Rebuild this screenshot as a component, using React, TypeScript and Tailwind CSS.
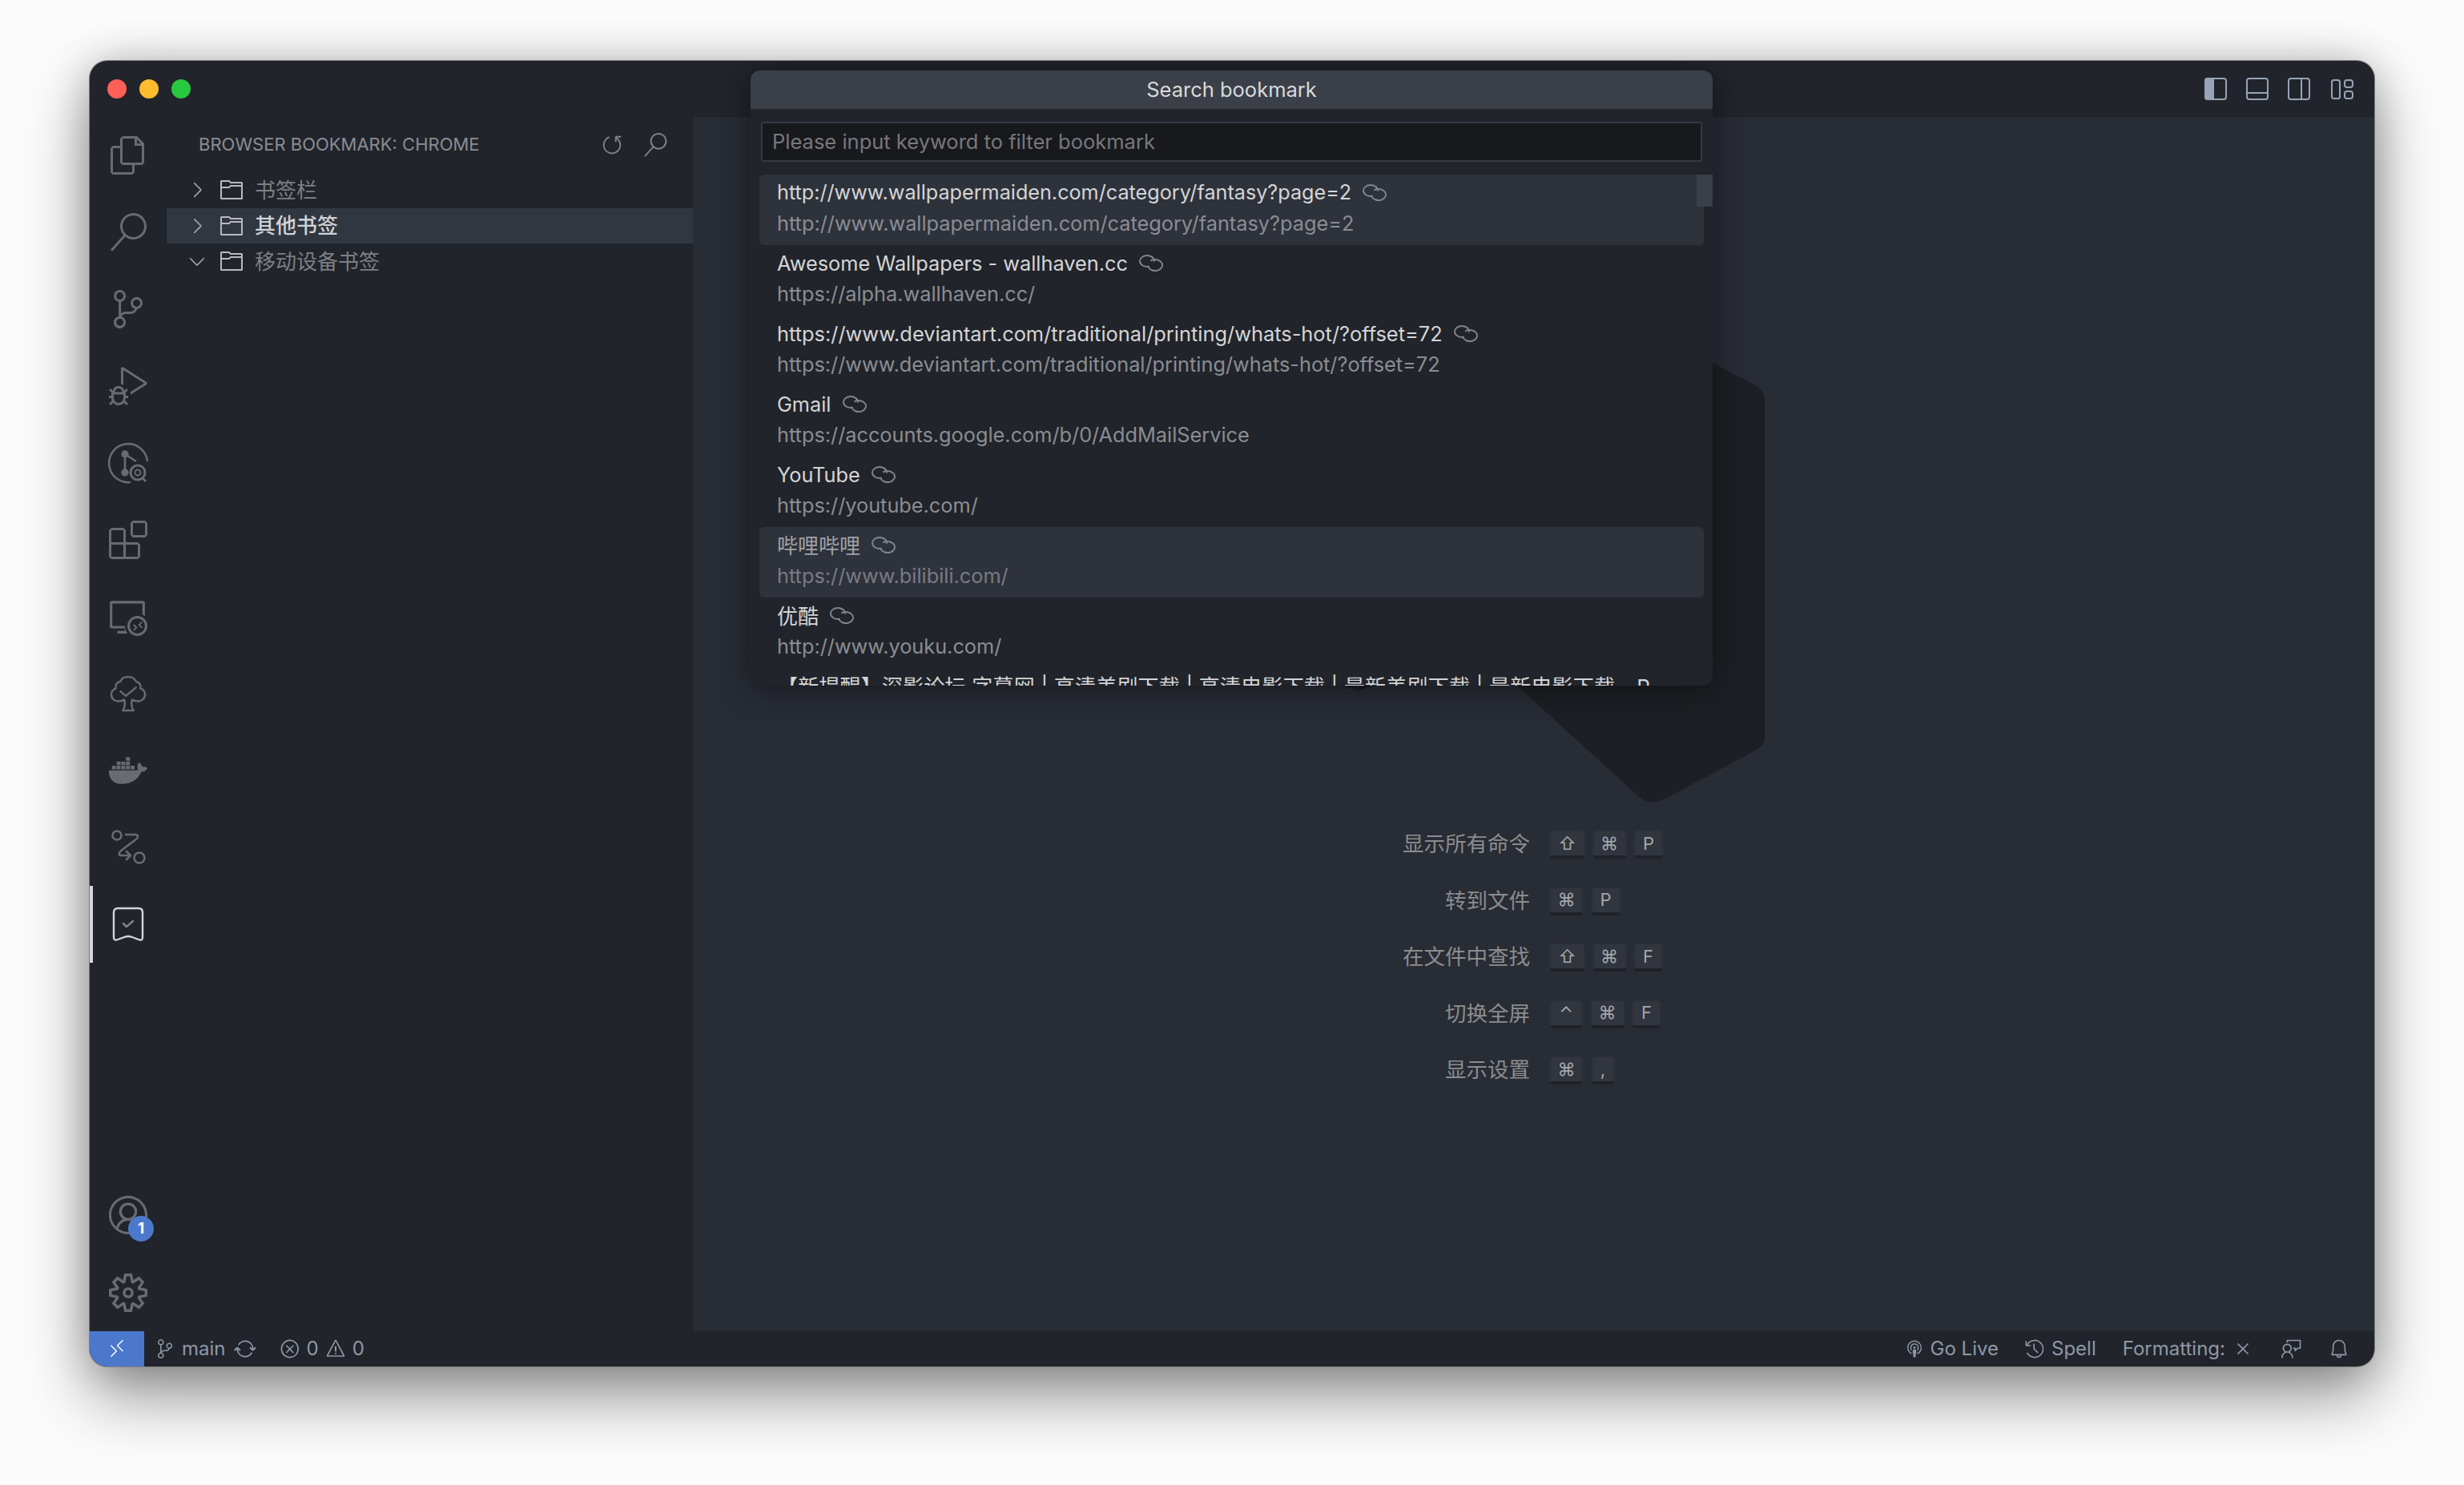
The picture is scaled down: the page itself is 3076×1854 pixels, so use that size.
import React from "react";
import {
  VscFiles,
  VscSearch,
  VscSourceControl,
  VscDebugAlt,
  VscExtensions,
  VscRemoteExplorer,
  VscAccount,
  VscSettingsGear,
  VscRefresh,
  VscChevronRight,
  VscChevronDown,
  VscFolder,
  VscRemote,
  VscSync,
  VscError,
  VscWarning,
  VscBroadcast,
  VscHistory,
  VscClose,
  VscFeedback,
  VscBell,
} from "react-icons/vsc";
import { FaDocker } from "react-icons/fa";

const GitGraphIcon = () => (
  <svg viewBox="0 0 80 80" className="w-[80px] h-[80px]" fill="none" stroke="currentColor" strokeWidth="2.6">
    <g transform="translate(0 2)">
      <path d="M43 62 A 24 24 0 1 1 64 36" />
      <circle cx="36" cy="27" r="3.4" fill="currentColor" />
      <circle cx="36" cy="50" r="3.4" fill="currentColor" />
      <path d="M36 27 V50 M36 27 L50 36" />
      <circle cx="52" cy="50" r="9" strokeWidth="3" />
      <circle cx="52" cy="50" r="3.5" strokeWidth="2" />
      <path d="M58 57 L62 61" />
    </g>
  </svg>
);

const TreeCheckIcon = () => (
  <svg viewBox="0 0 48 50" className="w-[46px] h-[48px]" fill="none" stroke="currentColor" strokeWidth="2.6" strokeLinejoin="round" strokeLinecap="round">
    <path d="M24 3 C18 3 15 6 14 9 C9 10 7 14 8 18 C3 20 2 24 2 26 C2 32 7 35 11 35 C14 35 17 34 19 33 C20 37 20 42 17 47 H31 C28 42 28 37 29 33 C31 34 34 35 37 35 C41 35 46 32 46 26 C46 24 45 20 40 18 C41 14 39 10 34 9 C33 6 30 3 24 3 Z" />
    <path d="M14 22 L21 28 L34 17" />
  </svg>
);

const RouteIcon = () => (
  <svg viewBox="0 0 48 48" className="w-[48px] h-[48px]" fill="none" stroke="currentColor" strokeWidth="2.6" strokeLinecap="round" strokeLinejoin="round">
    <circle cx="10" cy="9" r="5.5" />
    <circle cx="38" cy="37" r="6.5" />
    <path d="M21 8 H33 Q38 8 35 13 L15 28 Q10 34 16 34 H27" />
    <path d="M22 29 L27 34 L22 39" />
  </svg>
);

const BookmarkCheckIcon = () => (
  <svg viewBox="0 0 40 44" className="w-[40px] h-[44px]" fill="none" strokeLinecap="round" strokeLinejoin="round">
    <path d="M7 2 H33 Q38 2 38 7 V38 Q38 43 33 41 L25 38 Q20 36 15 38 L7 41 Q2 43 2 38 V7 Q2 2 7 2 Z" stroke="#d2d5da" strokeWidth="2.4" />
    <path d="M14 21 L18 25 L26 18" stroke="#7f8288" strokeWidth="2.6" />
  </svg>
);

const LinkIcon = () => (
  <svg viewBox="0 0 30 22" className="w-[30px] h-[22px] shrink-0" fill="none" stroke="#80848b" strokeWidth="1.9" strokeLinecap="round">
    <path d="M12 14.8 A9 7 0 1 1 19 8" />
    <path d="M15 7.2 A9 7 0 1 1 11.3 14.8" />
  </svg>
);

const TopLayoutIcons = () => (
  <div className="flex items-center text-[#98a3b5]">
    <svg viewBox="0 0 28 28" className="w-[28px] h-[28px]" fill="none" stroke="currentColor" strokeWidth="2">
      <rect x="1" y="1" width="26" height="26" rx="3" />
      <path d="M1 4 Q1 1 4 1 H11 V27 H4 Q1 27 1 24 Z" fill="currentColor" />
    </svg>
    <svg viewBox="0 0 28 28" className="w-[28px] h-[28px] ml-[24px]" fill="none" stroke="currentColor" strokeWidth="2">
      <rect x="1" y="1" width="26" height="26" rx="3" />
      <path d="M1 19 H27" />
    </svg>
    <svg viewBox="0 0 28 28" className="w-[28px] h-[28px] ml-[24px]" fill="none" stroke="currentColor" strokeWidth="2">
      <rect x="1" y="1" width="26" height="26" rx="3" />
      <path d="M17 1 V27" />
    </svg>
    <svg viewBox="0 0 28 28" className="w-[28px] h-[28px] ml-[26px]" fill="none" stroke="currentColor" strokeWidth="2">
      <rect x="1" y="3" width="10" height="23" rx="2.5" />
      <rect x="17" y="3" width="10" height="9" rx="3" />
      <rect x="17" y="17" width="10" height="9" rx="3" />
    </svg>
  </div>
);

const activityIcons = [
  <VscFiles key="files" className="w-[48px] h-[48px]" />,
  <VscSearch key="search" className="w-[48px] h-[48px]" />,
  <VscSourceControl key="scm" className="w-[48px] h-[48px]" />,
  <VscDebugAlt key="debug" className="w-[48px] h-[48px]" />,
  <GitGraphIcon key="graph" />,
  <VscExtensions key="ext" className="w-[48px] h-[48px]" />,
  <VscRemoteExplorer key="remote" className="w-[48px] h-[48px]" />,
  <TreeCheckIcon key="tree" />,
  <FaDocker key="docker" className="w-[48px] h-[48px]" />,
  <RouteIcon key="route" />,
];

const folders = [
  { name: "书签栏", open: false, selected: false },
  { name: "其他书签", open: false, selected: true },
  { name: "移动设备书签", open: true, selected: false },
];

const bookmarks = [
  { title: "http://www.wallpapermaiden.com/category/fantasy?page=2", url: "http://www.wallpapermaiden.com/category/fantasy?page=2", active: true, size: "text-[25.2px]" },
  { title: "Awesome Wallpapers - wallhaven.cc", url: "https://alpha.wallhaven.cc/", size: "text-[25.3px]" },
  { title: "https://www.deviantart.com/traditional/printing/whats-hot/?offset=72", url: "https://www.deviantart.com/traditional/printing/whats-hot/?offset=72", size: "text-[25.4px]" },
  { title: "Gmail", url: "https://accounts.google.com/b/0/AddMailService", size: "text-[25.3px]" },
  { title: "YouTube", url: "https://youtube.com/", size: "text-[25.3px]" },
  { title: "哔哩哔哩", url: "https://www.bilibili.com/", hover: true, size: "text-[26px]" },
  { title: "优酷", url: "http://www.youku.com/", size: "text-[26px]" },
  { title: "【新提醒】深影论坛 字幕网 | 高清美剧下载 | 高清电影下载 | 最新美剧下载 | 最新电影下载 _ P", url: "", size: "text-[26px] tracking-[0.2px]" },
];

const shortcuts = [
  { label: "显示所有命令", keys: [["⇧", "w-[45px]"], ["⌘", "w-[43px]"], ["P", "w-[38px]"]] },
  { label: "转到文件", keys: [["⌘", "w-[43px]"], ["P", "w-[38px]"]] },
  { label: "在文件中查找", keys: [["⇧", "w-[45px]"], ["⌘", "w-[43px]"], ["F", "w-[37px]"]] },
  { label: "切换全屏", keys: [["⌃", "w-[42px]"], ["⌘", "w-[44px]"], ["F", "w-[37px]"]] },
  { label: "显示设置", keys: [["⌘", "w-[43px]"], [",", "w-[31px]"]] },
];

export default function App() {
  return (
    <div className="w-[3076px] h-[1854px] bg-[#fbfbfb] pt-[76px] pl-[112px] overflow-hidden font-['Inter','Noto_Sans_CJK_SC',sans-serif]">
      <div className="relative w-[2852px] h-[1630px] rounded-[22px] overflow-hidden flex flex-col bg-[#21242a] ring-1 ring-[#808080] shadow-[0_36px_80px_rgba(0,0,0,0.42),0_0_50px_rgba(0,0,0,0.2)]">
        {/* title bar */}
        <div className="h-[70px] shrink-0 flex items-center justify-between pl-[22px] pr-[26px]">
          <div className="flex gap-[16px]">
            <span className="w-[24px] h-[24px] rounded-full bg-[#fe5f57]" />
            <span className="w-[24px] h-[24px] rounded-full bg-[#febc2e]" />
            <span className="w-[24px] h-[24px] rounded-full bg-[#28c83f]" />
          </div>
          <TopLayoutIcons />
        </div>

        <div className="flex-1 flex min-h-0">
          {/* activity bar */}
          <div className="w-[96px] shrink-0 flex flex-col justify-between text-[#686b70]">
            <div className="flex flex-col">
              {activityIcons.map((icon, i) => (
                <div key={i} className="h-[96px] flex items-center justify-center">
                  {icon}
                </div>
              ))}
              <div className="h-[96px] flex items-center justify-center border-l-4 border-[#d2d5da] pr-[4px]">
                <BookmarkCheckIcon />
              </div>
            </div>
            <div className="flex flex-col">
              <div className="h-[96px] flex items-center justify-center relative">
                <VscAccount className="w-[48px] h-[48px]" />
                <span className="absolute left-[48px] top-[49px] w-[32px] h-[32px] rounded-full bg-[#4c78cc] text-white text-[19px] font-bold flex items-center justify-center">
                  1
                </span>
              </div>
              <div className="h-[97px] flex items-center justify-center">
                <VscSettingsGear className="w-[48px] h-[48px]" />
              </div>
            </div>
          </div>

          {/* side bar */}
          <div className="w-[657px] shrink-0 flex flex-col">
            <div className="h-[69px] shrink-0 flex items-center justify-between pl-[40px] pr-[32px]">
              <span className="text-[22px] text-[#8a8d94]">BROWSER BOOKMARK: CHROME</span>
              <div className="flex items-center gap-[24px] text-[#7f8288]">
                <VscRefresh className="w-[30px] h-[30px] -scale-x-100" />
                <VscSearch className="w-[30px] h-[30px]" />
              </div>
            </div>
            {folders.map((f) => (
              <div
                key={f.name}
                className={`h-[44.5px] shrink-0 flex items-center pl-[23px] text-[26px] ${
                  f.selected ? "bg-[#313741] text-[#d0d2d6] font-medium" : "text-[#7c7f85]"
                }`}
              >
                {f.open ? (
                  <VscChevronDown className="w-[30px] h-[30px] text-[#a0a3a8]" />
                ) : (
                  <VscChevronRight className="w-[30px] h-[30px] text-[#a0a3a8]" />
                )}
                <VscFolder className="w-[32px] h-[32px] ml-[12px] text-[#b8babe]" />
                <span className="ml-[13px]">{f.name}</span>
              </div>
            ))}
          </div>

          {/* editor */}
          <div className="relative flex-1 bg-[#282c35] pt-[873px]">
            <svg viewBox="0 0 2099 1516" className="absolute left-0 top-0 w-[2099px] h-[1516px]" fill="#1d1f24">
              <path d="M1250 295 L1328 336 Q1338 342 1338 354 L1338 775 Q1338 785 1328 790 L1216 850 Q1193 862 1178 846 L1029 710 L810 710 L830 717 L850 710 L1029 700 Z" />
            </svg>
            <div className="relative flex flex-col">
              {shortcuts.map((s) => (
                <div key={s.label} className="h-[70.5px] flex items-center">
                  <span className="w-[1045px] text-right text-[26.5px] text-[#8b8c8e]">{s.label}</span>
                  <div className="flex gap-[8.5px] ml-[24px]">
                    {s.keys.map(([k, w], i) => (
                      <span
                        key={i}
                        className={`${w} h-[36px] flex items-center justify-center rounded-[5px] bg-[#31353d] border-2 border-[#2c2f38] border-b-4 border-b-[#1f2228] text-[22px] text-[#a5a7ab] font-['Inter','DejaVu_Sans',sans-serif]`}
                      >
                        {k}
                      </span>
                    ))}
                  </div>
                </div>
              ))}
            </div>
          </div>
        </div>

        {/* status bar */}
        <div className="h-[44px] shrink-0 flex items-center text-[24px] text-[#8f98a8]">
          <div className="w-[68px] h-full bg-[#4c78cc] flex items-center justify-center text-white">
            <VscRemote className="w-[26px] h-[26px]" />
          </div>
          <VscSourceControl className="w-[24px] h-[24px] ml-[14px]" />
          <span className="ml-[9px]">main</span>
          <VscSync className="w-[28px] h-[28px] ml-[10px]" />
          <VscError className="w-[26px] h-[26px] ml-[29px]" />
          <span className="ml-[8px]">0</span>
          <VscWarning className="w-[26px] h-[26px] ml-[8px]" />
          <span className="ml-[8px]">0</span>
          <VscBroadcast className="w-[24px] h-[24px] ml-auto" />
          <span className="ml-[8px]">Go Live</span>
          <VscHistory className="w-[26px] h-[26px] ml-[32px]" />
          <span className="ml-[8px]">Spell</span>
          <span className="ml-[33px]">Formatting:</span>
          <VscClose className="w-[26px] h-[26px] ml-[9px]" />
          <VscFeedback className="w-[26px] h-[26px] ml-[35px]" />
          <VscBell className="w-[26px] h-[26px] ml-[33px] mr-[31px]" />
        </div>

        {/* quick pick */}
        <div className="absolute left-[825px] top-[12px] w-[1201px] h-[768px] rounded-[12px] overflow-hidden bg-[#21242a] shadow-[0_4px_40px_rgba(0,0,0,0.45)] flex flex-col">
          <div className="h-[48px] shrink-0 bg-[#3b3f48] flex items-center justify-center text-[25.5px] text-[#d8d9db]">
            Search bookmark
          </div>
          <div className="mx-[13px] mt-[16px] h-[50px] shrink-0 flex items-center pl-[12px] bg-[#18191d] border-2 border-[#333a45] rounded-[3px] text-[25.5px] text-[#77787b]">
            Please input keyword to filter bookmark
          </div>
          <div className="relative mt-[16px] mx-[11px] flex-1 min-h-0">
            {bookmarks.map((b) => (
              <div
                key={b.title}
                className={`h-[88px] px-[22px] flex flex-col rounded-[6px] ${b.active || b.hover ? "bg-[#2e323b]" : ""}`}
              >
                <div className={`h-[46px] shrink-0 flex items-center gap-[14px] ${b.size} ${b.hover ? "text-[#a0a2a6]" : "text-[#d4d5d7]"}`}>
                  <span className="whitespace-nowrap">{b.title}</span>
                  {b.url && <LinkIcon />}
                </div>
                <div className={`h-[30px] shrink-0 flex items-center text-[25.3px] ${b.hover ? "text-[#787b82]" : "text-[#8a8d93]"}`}>{b.url}</div>
              </div>
            ))}
            <div className="absolute right-[-11px] top-0 w-[20px] h-[40px] bg-[#3a3f49]" />
          </div>
        </div>
      </div>
    </div>
  );
}
